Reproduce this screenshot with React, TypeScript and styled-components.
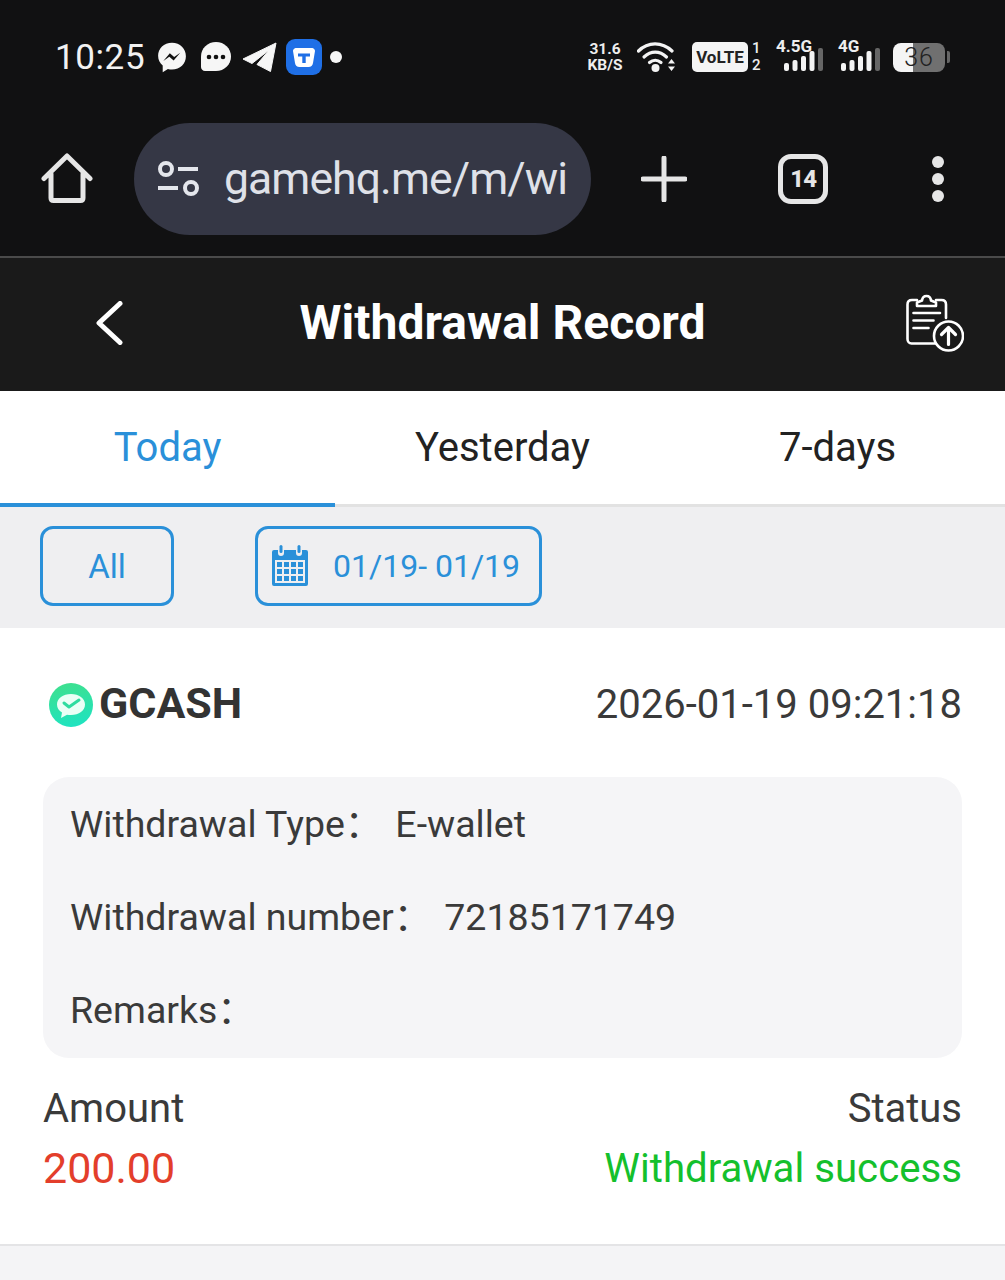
import React from "react";
import styled, { createGlobalStyle } from "styled-components";

const Global = createGlobalStyle`
  html, body { margin: 0; padding: 0; background: #f4f4f6; }
  body { font-family: Roboto, "Noto Sans CJK SC", "Liberation Sans", sans-serif; }
  * { box-sizing: border-box; }
`;

const Page = styled.div`
  width: 1005px;
  height: 1280px;
  overflow: hidden;
  display: flex;
  flex-direction: column;
  background: #f4f4f6;
`;

const Top = styled.div`
  background: #111112;
  height: 256px;
  display: flex;
  flex-direction: column;
`;

const StatusBar = styled.div`
  height: 114px;
  padding: 0 55px 0 55px;
  display: flex;
  align-items: center;
  justify-content: space-between;
`;

const StatusGroup = styled.div`
  display: flex;
  align-items: center;
`;

const Spacer = styled.span<{ $w: number }>`
  display: block;
  flex: none;
  width: ${(p) => p.$w}px;
`;

const Time = styled.span`
  font-size: 35px;
  color: #f2f2f2;
  letter-spacing: 0.6px;
`;

const Speed = styled.span`
  display: flex;
  flex-direction: column;
  width: 36px;
  align-items: center;
  font-size: 15.5px;
  line-height: 16px;
  font-weight: 700;
  color: #eee;
  white-space: nowrap;
`;

const Volte = styled.span`
  width: 56px;
  height: 30px;
  border-radius: 5px;
  background: #f4f4f4;
  color: #222;
  font-size: 17px;
  font-weight: 700;
  display: flex;
  align-items: center;
  justify-content: center;
`;

const SimNums = styled.span`
  display: flex;
  flex-direction: column;
  width: 9px;
  color: #eee;
  font-size: 15px;
  line-height: 17px;
  font-weight: 500;
  margin-left: 4px;
`;

const Signal = styled.span<{ $w: number }>`
  position: relative;
  display: block;
  width: ${(p) => p.$w}px;
  height: 34px;
`;

const SignalLabel = styled.span`
  position: absolute;
  left: 0;
  top: -2px;
  font-size: 17px;
  line-height: 17px;
  font-weight: 700;
  color: #eee;
`;

const BarsSvg = styled.svg<{ $x: number }>`
  position: absolute;
  left: ${(p) => p.$x}px;
  top: 0;
`;

const Battery = styled.span`
  width: 52px;
  height: 29px;
  border-radius: 8px;
  overflow: hidden;
  background: linear-gradient(90deg, #f5f5f5 0 38%, #707070 38% 100%);
  display: flex;
  align-items: center;
  justify-content: center;
  color: #222;
  font-size: 25px;
  letter-spacing: 1px;
  font-weight: 300;
`;

const BatteryTip = styled.span`
  width: 3px;
  height: 12px;
  border-radius: 0 2px 2px 0;
  background: #666;
  margin-left: 2px;
`;

const Toolbar = styled.div`
  flex: 1;
  display: flex;
  align-items: flex-start;
  padding-top: 9px;
`;

const HomeSlot = styled.div`
  width: 134px;
  height: 112px;
  padding-left: 41px;
  display: flex;
  align-items: center;
`;

const Omnibox = styled.div`
  width: 458px;
  height: 112px;
  border-radius: 56px;
  background: #353745;
  padding: 0 0 0 23px;
  display: flex;
  align-items: center;
  gap: 23px;
`;

const Url = styled.span`
  font-size: 44.5px;
  letter-spacing: -0.9px;
  color: #dfe1e8;
  white-space: nowrap;
  padding-bottom: 1px;
`;

const ToolSlot = styled.div<{ $w: number }>`
  width: ${(p) => p.$w}px;
  height: 112px;
  display: flex;
  align-items: center;
  justify-content: center;
`;

const TabCount = styled.div`
  width: 50px;
  height: 50px;
  border: 5px solid #e6e6e6;
  border-radius: 13px;
  color: #e6e6e6;
  font-size: 24px;
  letter-spacing: -1px;
  font-weight: 800;
  display: flex;
  align-items: center;
  justify-content: center;
`;

const Dots = styled.div`
  display: flex;
  flex-direction: column;
  gap: 5px;
`;

const Dot = styled.span`
  display: block;
  width: 12px;
  height: 12px;
  border-radius: 50%;
  background: #e6e6e6;
`;

const StatusDot = styled(Dot)`
  background: #f6f6f6;
`;

const Header = styled.header`
  height: 135px;
  border-top: 2px solid #4a4a4a;
  background: #1a1a1a;
  display: flex;
  align-items: center;
  justify-content: space-between;
  padding: 0 41px 3px 95px;
  position: relative;
`;

const Title = styled.h1`
  position: absolute;
  left: 0;
  right: 0;
  top: 37px;
  line-height: 56px;
  text-align: center;
  margin: 0;
  font-size: 48px;
  font-weight: 700;
  color: #fff;
`;

const Tabs = styled.nav`
  height: 116px;
  background: #fff;
  border-bottom: 3px solid #e2e2e2;
  display: flex;
`;

const Tab = styled.div<{ $active?: boolean }>`
  flex: 1;
  height: 116px;
  display: flex;
  align-items: center;
  justify-content: center;
  font-size: 40px;
  color: ${(p) => (p.$active ? "#2a90d9" : "#222")};
  border-bottom: 4px solid ${(p) => (p.$active ? "#2a90d9" : "transparent")};
`;

const Filters = styled.div`
  height: 121px;
  background: #efeff1;
  padding: 19px 0 0 40px;
  display: flex;
  align-items: flex-start;
  gap: 81px;
`;

const FilterButton = styled.div<{ $w: number }>`
  width: ${(p) => p.$w}px;
  height: 80px;
  border: 3px solid #2a90d9;
  border-radius: 13px;
  color: #2a90d9;
  font-size: 33px;
  display: flex;
  align-items: center;
  justify-content: center;
  white-space: nowrap;
`;

const DateButton = styled(FilterButton)`
  justify-content: flex-start;
  padding-left: 14px;
  gap: 25px;
`;

const DateRange = styled.span`
  font-size: 32px;
`;

const Card = styled.section`
  height: 618px;
  background: #fff;
  border-bottom: 2px solid #e4e4e6;
  padding: 0 43px;
  display: flex;
  flex-direction: column;
`;

const CardTop = styled.div`
  height: 149px;
  display: flex;
  align-items: center;
  justify-content: space-between;
`;

const Brand = styled.div`
  display: flex;
  align-items: center;
  gap: 6px;
  margin-left: 6px;
  font-size: 43px;
  font-weight: 700;
  color: #333;
`;

const LogoSvg = styled.svg`
  margin-top: 4px;
`;

const DateText = styled.span`
  font-size: 40px;
  color: #3a3a3a;
  padding-top: 3px;
`;

const Details = styled.div`
  height: 281px;
  border-radius: 26px;
  background: #f5f5f7;
  padding: 0 27px 2px;
  display: flex;
  flex-direction: column;
  justify-content: space-around;
`;

const DetailRow = styled.div`
  display: flex;
  align-items: baseline;
  font-size: 37.5px;
  line-height: 44px;
  color: #3a3a3a;
`;

const DetailLabel = styled.span`
  margin-right: 13px;
`;

const Summary = styled.div`
  margin-top: 28px;
  display: flex;
  justify-content: space-between;
`;

const SummaryColumn = styled.div<{ $right?: boolean }>`
  display: flex;
  flex-direction: column;
  gap: 15px;
  align-items: ${(p) => (p.$right ? "flex-end" : "flex-start")};
`;

const SummaryLabel = styled.span`
  font-size: 40px;
  line-height: 45px;
  color: #3a3a3a;
`;

const SummaryValue = styled.span<{ $color: string; $size: number }>`
  font-size: ${(p) => p.$size}px;
  line-height: 45px;
  color: ${(p) => p.$color};
`;

const Messenger = () => (
  <svg width="32" height="33" viewBox="0 0 36 38">
    <path d="M18 2C8.600 2 2 8.700 2 17c0 4.600 2 8.500 5.300 11.200V36l6-3.800c1.600.4 3.200.6 4.700.6 9.400 0 16-6.800 16-15.300S27.400 2 18 2z" fill="#f6f6f6" />
    <path d="M8 23l7.500-9 5 4.400 7-5-7.600 9.100-5-4.400z" fill="#111" />
  </svg>
);

const Chat = () => (
  <svg width="30" height="30" viewBox="0 0 30 30">
    <path d="M15 0c8.300 0 15 6.400 15 14.400S23.300 29 15 29H4c-2.200 0-4-1.800-4-4V14.400C0 6.400 6.700 0 15 0z" fill="#f6f6f6" />
    <circle cx="8" cy="15" r="2.300" fill="#111" />
    <circle cx="15" cy="15" r="2.300" fill="#111" />
    <circle cx="22" cy="15" r="2.300" fill="#111" />
  </svg>
);

const Telegram = () => (
  <svg width="34" height="30" viewBox="0 0 34 30">
    <path d="M33 1L0 17l9 4.500L26 8 14 22.500 27.500 29.500z" fill="#f6f6f6" stroke="#f6f6f6" strokeLinejoin="round" />
  </svg>
);

const BlueApp = () => (
  <svg width="36" height="36" viewBox="0 0 36 36">
    <rect width="36" height="36" rx="9" fill="#1f6fe6" />
    <path d="M7 12c0-1.500 1-2.500 2.500-3h17c1.500.5 2.500 1.500 2.500 3l-2 12c-.4 2.500-2 4-4.500 4h-9C11 28 9.400 26.500 9 24z" fill="#fff" />
    <path d="M12 14.500h12v3h-4.300V24h-3.400v-6.500H12z" fill="#1f6fe6" />
  </svg>
);

const Wifi = () => (
  <svg width="40" height="32" viewBox="0 0 40 32">
    <g fill="none" stroke="#f4f4f4" strokeWidth="3.200" strokeLinecap="round">
      <path d="M1.500 10C11 .5 25 .5 35 10" />
      <path d="M7 16c7-6.500 15.500-6.500 22.500 0" />
      <path d="M12.500 21.500c3.500-3 8-3 11.500 0" />
    </g>
    <circle cx="18.500" cy="27" r="4" fill="#f4f4f4" />
    <path d="M31 22.500h7l-3.500-4.500zM31 25.500h7L34.500 30z" fill="#f4f4f4" />
  </svg>
);

const Bars = ({ x }: { x: number }) => (
  <BarsSvg $x={x} width="40" height="34" viewBox="0 0 40 34">
    <g fill="#f4f4f4">
      <rect x="0" y="23" width="5" height="8" rx="2" />
      <rect x="8.500" y="20" width="5" height="11" rx="2" />
      <rect x="17" y="16" width="5" height="15" rx="2" />
      <rect x="25.500" y="11" width="5" height="20" rx="2" />
    </g>
    <rect x="34" y="8" width="5" height="23" rx="2" fill="#666" />
  </BarsSvg>
);

const Home = () => (
  <svg width="52" height="52" viewBox="0 0 52 52">
    <path d="M3 25.500L26 3l23 22.500M10 21v24c0 1.500 1 2.500 2.500 2.500h27c1.500 0 2.500-1 2.500-2.500V21" fill="none" stroke="#e6e6e6" strokeWidth="5" strokeLinecap="round" strokeLinejoin="round" />
  </svg>
);

const Tune = () => (
  <svg width="44" height="38" viewBox="0 0 44 38">
    <g fill="none" stroke="#e4e6ec" strokeWidth="4">
      <circle cx="9" cy="9" r="6" />
      <circle cx="34" cy="28" r="6" />
      <path d="M21 9h20M1 28h20" />
    </g>
  </svg>
);

const Plus = () => (
  <svg width="46" height="46" viewBox="0 0 46 46">
    <path d="M23 2v42M2 23h42" stroke="#e6e6e6" strokeWidth="5" strokeLinecap="round" />
  </svg>
);

const Back = () => (
  <svg width="28" height="44" viewBox="0 0 28 44">
    <path d="M25 2.500L4 22l21 19.500" fill="none" stroke="#fff" strokeWidth="5" strokeLinecap="round" strokeLinejoin="round" />
  </svg>
);

const ClipboardUp = () => (
  <svg width="58" height="58" viewBox="0 0 58 58">
    <g fill="none" stroke="#fff" strokeWidth="2.600" strokeLinecap="round" strokeLinejoin="round">
      <path d="M11 6H6C3.300 6 1.500 7.800 1.500 10.500v34.500c0 2.500 1.700 4.500 4 4.500H29M30 6h5.500c2.700 0 4.500 1.800 4.500 4.500V24" />
      <path d="M11 12h19V8.500l-5-2C24.300 .5 16.700 .5 16 6.500l-5 2z" />
      <path d="M7.500 19h26.500M7.500 26.500h20M7.500 34h15" />
      <circle cx="42.500" cy="42" r="14.500" />
      <path d="M42.500 50.500V34M35.500 40.500l7-7 7 7" strokeWidth="3.200" />
    </g>
  </svg>
);

const Calendar = () => (
  <svg width="36" height="42" viewBox="0 0 36 42">
    <path d="M2 5h4v3a3 3 0 0 0 6 0V5h12v3a3 3 0 0 0 6 0V5h4a2 2 0 0 1 2 2v32a2 2 0 0 1-2 2H2a2 2 0 0 1-2-2V7a2 2 0 0 1 2-2z" fill="#2a90d9" />
    <rect x="7.500" y="0" width="3" height="8" rx="1.500" fill="#2a90d9" />
    <rect x="25.500" y="0" width="3" height="8" rx="1.500" fill="#2a90d9" />
    <rect x="3" y="15" width="30" height="23" fill="#efeff1" />
    {[17, 24, 31].map((y) =>
      [5, 12, 19, 26].map((x) => <rect key={`${x}-${y}`} x={x} y={y} width="5" height="5" fill="#2a90d9" />)
    )}
  </svg>
);

const GcashLogo = () => (
  <LogoSvg width="44" height="44" viewBox="0 0 44 44">
    <defs>
      <linearGradient id="gc" x1="0.300" y1="0" x2="0.500" y2="1">
        <stop offset="0" stopColor="#3ee08e" />
        <stop offset="1" stopColor="#1fe3c0" />
      </linearGradient>
    </defs>
    <circle cx="22" cy="22" r="22" fill="url(#gc)" />
    <path d="M22 11c-8 0-14 4.400-14 10.500 0 3.500 2 6.300 5 8l-1 5.500 6-3.300c1.300.3 2.600.3 4 .3 8 0 14-4.400 14-10.500S30 11 22 11z" fill="#eafff6" />
    <path d="M15 20l5 4 10-7" fill="none" stroke="#2fdca0" strokeWidth="3" strokeLinecap="round" strokeLinejoin="round" />
  </LogoSvg>
);

export default function App() {
  return (
    <Page>
      <Global />
      <Top>
        <StatusBar>
          <StatusGroup>
            <Time>10:25</Time>
            <Spacer $w={11} />
            <Messenger />
            <Spacer $w={13} />
            <Chat />
            <Spacer $w={12} />
            <Telegram />
            <Spacer $w={9} />
            <BlueApp />
            <Spacer $w={8} />
            <StatusDot />
          </StatusGroup>
          <StatusGroup>
            <Speed>
              <span>31.6</span>
              <span>KB/S</span>
            </Speed>
            <Spacer $w={14} />
            <Wifi />
            <Spacer $w={15} />
            <Volte>VoLTE</Volte>
            <SimNums>
              <span>1</span>
              <span>2</span>
            </SimNums>
            <Spacer $w={15} />
            <Signal $w={47}>
              <SignalLabel>4.5G</SignalLabel>
              <Bars x={8} />
            </Signal>
            <Spacer $w={15} />
            <Signal $w={41}>
              <SignalLabel>4G</SignalLabel>
              <Bars x={3} />
            </Signal>
            <Spacer $w={14} />
            <Battery>36</Battery>
            <BatteryTip />
          </StatusGroup>
        </StatusBar>
        <Toolbar>
          <HomeSlot>
            <Home />
          </HomeSlot>
          <Omnibox>
            <Tune />
            <Url>gamehq.me/m/wi</Url>
          </Omnibox>
          <ToolSlot $w={145}>
            <Plus />
          </ToolSlot>
          <ToolSlot $w={134}>
            <TabCount>14</TabCount>
          </ToolSlot>
          <ToolSlot $w={135}>
            <Dots>
              <Dot />
              <Dot />
              <Dot />
            </Dots>
          </ToolSlot>
        </Toolbar>
      </Top>
      <Header>
        <Back />
        <Title>Withdrawal Record</Title>
        <ClipboardUp />
      </Header>
      <Tabs>
        <Tab $active>Today</Tab>
        <Tab>Yesterday</Tab>
        <Tab>7-days</Tab>
      </Tabs>
      <Filters>
        <FilterButton $w={134}>All</FilterButton>
        <DateButton $w={287}>
          <Calendar />
          <DateRange>01/19- 01/19</DateRange>
        </DateButton>
      </Filters>
      <Card>
        <CardTop>
          <Brand>
            <GcashLogo />
            GCASH
          </Brand>
          <DateText>2026-01-19 09:21:18</DateText>
        </CardTop>
        <Details>
          <DetailRow>
            <DetailLabel>Withdrawal Type：</DetailLabel>
            E-wallet
          </DetailRow>
          <DetailRow>
            <DetailLabel>Withdrawal number：</DetailLabel>
            72185171749
          </DetailRow>
          <DetailRow>
            <DetailLabel>Remarks：</DetailLabel>
          </DetailRow>
        </Details>
        <Summary>
          <SummaryColumn>
            <SummaryLabel>Amount</SummaryLabel>
            <SummaryValue $color="#e33e2b" $size={43}>200.00</SummaryValue>
          </SummaryColumn>
          <SummaryColumn $right>
            <SummaryLabel>Status</SummaryLabel>
            <SummaryValue $color="#14c02c" $size={40.2}>Withdrawal success</SummaryValue>
          </SummaryColumn>
        </Summary>
      </Card>
    </Page>
  );
}
